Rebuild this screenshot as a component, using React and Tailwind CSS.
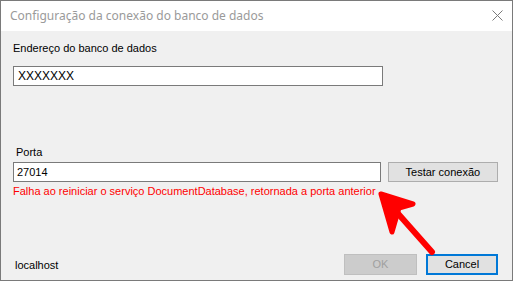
import React from 'react'

const ui = { fontFamily: '"Liberation Sans", Arial, sans-serif' }
const title = { fontFamily: '"Noto Sans", "Open Sans", sans-serif' }

const Arrow = () => (
  <svg className="absolute left-0 top-0 pointer-events-none" width="519" height="286" viewBox="0 0 519 286">
    <path d="M386,200 L432,252" stroke="#ff0000" strokeWidth="6" strokeLinecap="round" fill="none" />
    <path
      d="M381,194 L413,204 L399,208 L392,232 Z"
      fill="#ff0000"
      stroke="#ff0000"
      strokeWidth="5"
      strokeLinejoin="round"
    />
  </svg>
)

const App = () => {
  return (
    <div className="relative w-[519px] h-[286px] bg-white" style={ui}>
      <div className="w-[513px] h-[281px] border border-[#7a7a7a] flex flex-col">
        <div className="h-[30px] bg-white flex items-center justify-between pl-[9px] pr-[9px]">
          <span className="text-[12px] text-[#9a9a9a]" style={title}>
            Configuração da conexão do banco de dados
          </span>
          <svg width="11" height="11" viewBox="0 0 11 11" className="mt-[-1px]">
            <path d="M0.5,0.5 L10.5,10.5 M10.5,0.5 L0.5,10.5" stroke="#7a7a7a" strokeWidth="1" />
          </svg>
        </div>

        <div className="flex-1 bg-[#f0f0f0] flex flex-col pl-[12px] pr-[14px] pb-[5px] text-[11px] text-black">
          <div className="mt-[11px] leading-[13px]">Endereço do banco de dados</div>
          <div className="mt-[11px] w-[370px] h-[20px] bg-white border border-[#7a7a7a] flex items-center pl-[4px] text-[12px]">
            XXXXXXX
          </div>

          <div className="mt-[60px] ml-[3px] leading-[13px]">Porta</div>
          <div className="mt-[3px] flex items-center gap-[7px]">
            <div className="w-[370px] h-[20px] bg-white border border-[#7a7a7a] flex items-center pl-[3px]">
              27014
            </div>
            <div className="w-[111px] h-[20px] bg-[#e1e1e1] border border-[#adadad] flex items-center justify-center">
              Testar conexão
            </div>
          </div>
          <div className="mt-[3px] leading-[13px] text-[#ff0000]">
            Falha ao reiniciar o serviço DocumentDatabase, retornada a porta anterior
          </div>

          <div className="mt-auto flex items-center justify-between">
            <span className="ml-[2px] mt-[2px]">localhost</span>
            <div className="flex gap-[9px]">
              <div className="w-[73px] h-[21px] bg-[#cccccc] border border-[#bfbfbf] text-[#a0a0a0] flex items-center justify-center">
                OK
              </div>
              <div className="w-[72px] h-[21px] bg-[#e1e1e1] border-2 border-[#0078d7] flex items-center justify-center">
                Cancel
              </div>
            </div>
          </div>
        </div>
      </div>
      <Arrow />
    </div>
  )
}

export default App
